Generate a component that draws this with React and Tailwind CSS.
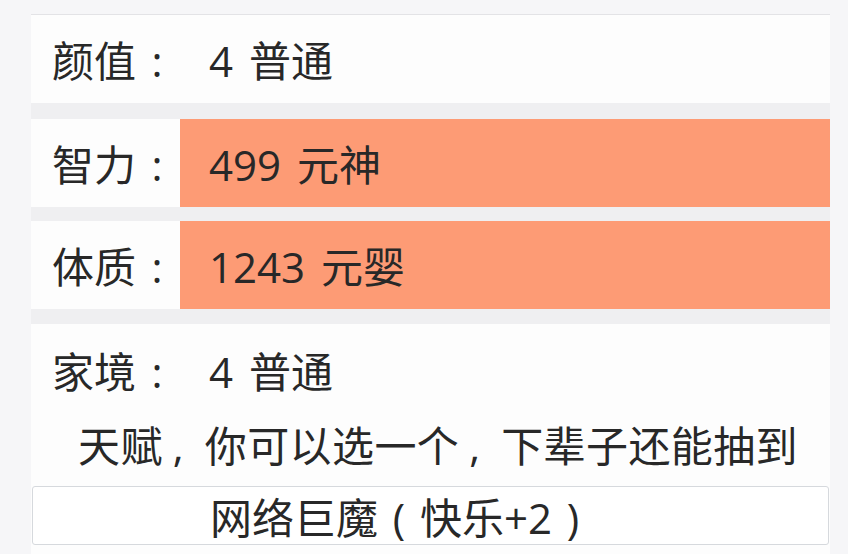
export default function App() {
  const font = { fontFamily: '"Open Sans", "Noto Sans CJK SC", sans-serif' };
  const Colon = () => <span className="inline-block w-[42px] text-center">:</span>;
  const Row = ({ label, value, hot }) => (
    <div className="flex h-[88px]">
      <div className="w-[149px] shrink-0 flex items-center pl-[21px] pt-[3px] bg-[#fdfdfd]">
        <span>{label}</span>
        <Colon />
      </div>
      <div className={`flex-1 flex items-center pl-[29px] pt-[3px] ${hot ? 'bg-[#fd9b75]' : 'bg-[#fdfdfd]'}`}>
        <span className="[word-spacing:5px]">{value}</span>
      </div>
    </div>
  );
  const Sep = ({ h }) => <div className={`bg-[#efeff1] ${h}`} />;
  return (
    <div
      className="w-[848px] h-[554px] overflow-hidden bg-[#f6f6f8] text-[42px] leading-none text-[#282828]"
      style={font}
    >
      <div className="h-[14px]" />
      <div className="ml-[31px] w-[799px] h-[540px] border-t border-[#e3e3e6] bg-[#fdfdfd] flex flex-col">
        <Row label="颜值" value="4 普通" />
        <Sep h="h-[16px]" />
        <Row label="智力" value="499 元神" hot />
        <Sep h="h-[14px]" />
        <Row label="体质" value="1243 元婴" hot />
        <Sep h="h-[15px]" />
        <div className="flex h-[90px]">
          <div className="w-[149px] shrink-0 flex items-center pl-[21px] pt-[6px]">
            <span>家境</span>
            <Colon />
          </div>
          <div className="flex-1 flex items-center pl-[29px] pt-[6px]">
            <span className="[word-spacing:5px]">4 普通</span>
          </div>
        </div>
        <div className="h-[64px] flex items-center pl-[47px] tracking-[0.4px]">
          <span>天赋</span>
          <span className="inline-block w-[42px] pl-[10px]">,</span>
          <span>你可以选一个</span>
          <span className="inline-block w-[42px] pl-[10px]">,</span>
          <span>下辈子还能抽到</span>
        </div>
        <div className="mt-[8px] ml-[1px] w-[797px] h-[59px] border border-[#d6d9dd] rounded-[3px] bg-white flex items-center pl-[177px] pt-[4px]">
          <span>网络巨魔</span>
          <span className="inline-block w-[42px] text-center">(</span>
          <span>快乐+2</span>
          <span className="inline-block w-[42px] text-center">)</span>
        </div>
      </div>
    </div>
  );
}
